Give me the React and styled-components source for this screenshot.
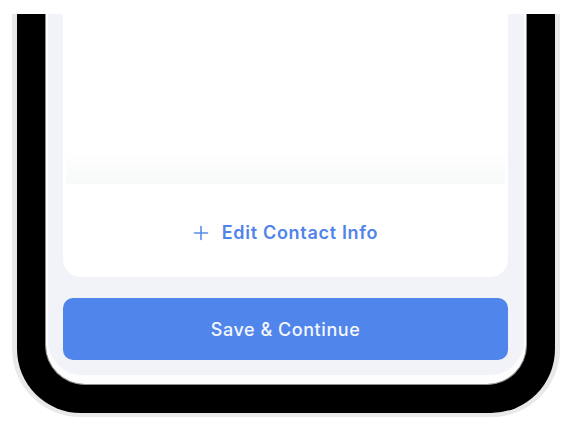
import React from 'react';
import styled, { createGlobalStyle } from 'styled-components';

const GlobalStyle = createGlobalStyle`
    body {
        margin: 0;
        background: #ffffff;
        font-family: Inter, "Open Sans", Arial, sans-serif;
    }
`

const Page = styled.div`
    padding: 14px 0 0 12px;
    width: 574px;
    height: 432px;
    box-sizing: border-box;
`

const Frame = styled.div`
    width: 548px;
    box-sizing: border-box;
    background: #e9e9eb;
    padding: 0 5px 4px;
    border-radius: 0 0 68px 68px;
`

const Bezel = styled.div`
    background: #000;
    padding: 0 28px 28px;
    border-radius: 0 0 64px 64px;
`

const Screen = styled.div`
    background: #fdfdfd;
    padding: 0 2px 9px;
    border: 1px solid #8e8e92;
    border-top: none;
    border-radius: 0 0 40px 40px;
`

const Content = styled.div`
    background: #f2f3f8;
    padding: 0 16px 15px 15px;
    border-radius: 0 0 34px 34px;
    display: flex;
    flex-direction: column;
    gap: 21px;
`

const Card = styled.div`
    height: 263px;
    background: #ffffff;
    border-radius: 0 0 18px 18px;
    display: flex;
    flex-direction: column;
    padding-top: 136px;
    box-sizing: border-box;
`

const Fade = styled.div`
    height: 34px;
    margin: 0 3px;
    background: linear-gradient(to bottom, #ffffff, #f8f9f9);
`

const EditRow = styled.button`
    flex: 1;
    border: none;
    background: transparent;
    display: flex;
    align-items: center;
    justify-content: center;
    gap: 13px;
    padding: 4px 0 0 0;
    color: #5084ea;
    font-family: Inter, "Open Sans", Arial, sans-serif;
    font-size: 18px;
    font-weight: 600;
    letter-spacing: 0.7px;
    cursor: pointer;
`

const SaveButton = styled.button`
    height: 62px;
    border: none;
    border-radius: 10px;
    background: #5085ec;
    color: #f4f7fe;
    font-family: Inter, "Open Sans", Arial, sans-serif;
    font-size: 18px;
    font-weight: 500;
    letter-spacing: 0.55px;
    cursor: pointer;
`

function PlusIcon() {
    return (
        <svg width="16" height="16" viewBox="0 0 16 16" fill="none">
            <path d="M8 1.5v13M1.5 8h13" stroke="#5a8cec" strokeWidth="1.6" strokeLinecap="round" />
        </svg>
    );
}

function App() {
    return (
        <>
            <GlobalStyle />
            <Page>
                <Frame>
                    <Bezel>
                        <Screen>
                            <Content>
                                <Card>
                                    <Fade />
                                    <EditRow>
                                        <PlusIcon />
                                        Edit Contact Info
                                    </EditRow>
                                </Card>
                                <SaveButton>Save &amp; Continue</SaveButton>
                            </Content>
                        </Screen>
                    </Bezel>
                </Frame>
            </Page>
        </>
    );
}

export default App;
